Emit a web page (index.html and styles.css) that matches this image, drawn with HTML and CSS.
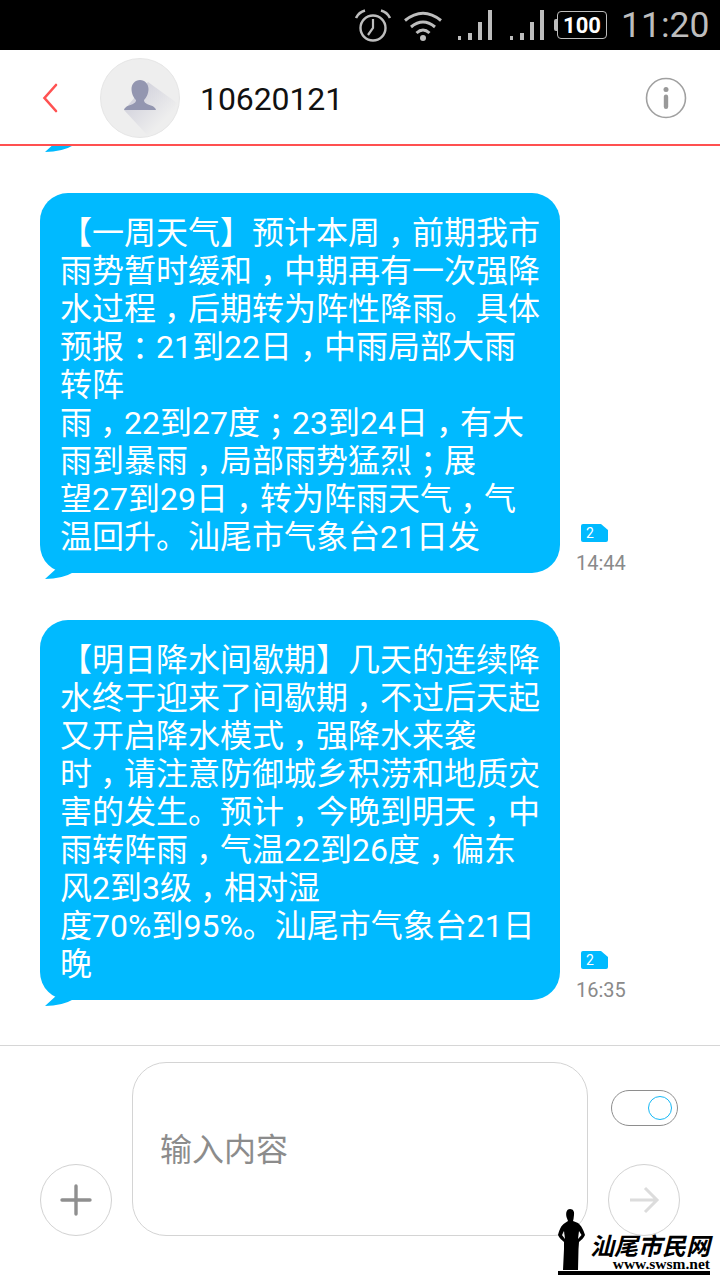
FILE: index.html
```html
<!DOCTYPE html>
<html lang="zh-CN">
  <head>
    <meta charset="UTF-8" />
    <meta name="viewport" content="width=device-width, initial-scale=1.0" />
    <title>10620121</title>
    <link rel="stylesheet" href="styles.css">
  </head>
  <body>
    <div class="screen">

      <!-- status bar -->
      <div class="statusbar">
        <svg class="st-alarm" width="38" height="34" viewBox="0 0 38 34">
          <circle cx="19" cy="19" r="12.5" fill="none" stroke="#bdbdbd" stroke-width="2.4"/>
          <path d="M19 10v9l-5 7" fill="none" stroke="#bdbdbd" stroke-width="2.2"/>
          <path d="M2 9 Q5 3 11 1.500M36 9 Q33 3 27 1.500" fill="none" stroke="#bdbdbd" stroke-width="2.6"/>
        </svg>
        <svg class="st-wifi" width="38" height="32" viewBox="0 0 38 32">
          <path d="M1 10.500 Q19 -4 37 10.500M7 17 Q19 7 31 17M12.500 23 Q19 17 25.500 23" fill="none" stroke="#bdbdbd" stroke-width="3"/>
          <circle cx="19" cy="28" r="3" fill="#bdbdbd"/>
        </svg>
        <svg class="st-signal" width="36" height="30" viewBox="0 0 36 30">
          <path d="M1 26h3v4h-3zM11 23h4v7h-4zM21 12h4v18h-4zM31 0h4v30h-4z" fill="#bdbdbd"/>
        </svg>
        <svg class="st-signal st-signal2" width="36" height="30" viewBox="0 0 36 30">
          <path d="M1 26h3v4h-3zM11 23h4v7h-4zM21 12h4v18h-4zM31 0h4v30h-4z" fill="#bdbdbd"/>
        </svg>
        <div class="battery"><span>100</span></div>
        <div class="clock">11:20</div>
      </div>

      <!-- title bar -->
      <div class="titlebar">
        <svg class="back" width="16" height="30" viewBox="0 0 16 30">
          <path d="M14 2 L2.500 15 L14 28" fill="none" stroke="#ff5252" stroke-width="2.600" stroke-linecap="round"/>
        </svg>
        <div class="avatar">
          <svg width="78" height="78" viewBox="0 0 78 78">
            <defs>
              <linearGradient id="longshadow" x1="0.2" y1="0.2" x2="0.9" y2="0.9">
                <stop offset="0" stop-color="#d2d2dc"/>
                <stop offset="0.75" stop-color="#eeeeee"/>
              </linearGradient>
            </defs>
            <path d="M47 23 L76 44 Q70 66 48 78 L23 51 Z" fill="url(#longshadow)"/>
            <path d="M39 21 C44 21 47.500 25 47.500 30 C47.500 35 45 39 43 41 C43 44 46 45 50 46.500 C53 47.500 54.500 49 55 51 L23 51 C23.500 49 25 47.500 28 46.500 C32 45 35 44 35 41 C33 39 30.500 35 30.500 30 C30.500 25 34 21 39 21 Z" fill="#9396b0"/>
          </svg>
        </div>
        <div class="contact">10620121</div>
        <svg class="info" width="42" height="42" viewBox="0 0 42 42">
          <circle cx="21" cy="21" r="19.500" fill="none" stroke="#a0a0a0" stroke-width="1.600"/>
          <circle cx="21" cy="12.500" r="2.500" fill="#999"/>
          <rect x="18.800" y="17.500" width="4.400" height="14.500" rx="2.200" fill="#999"/>
        </svg>
      </div>

      <!-- messages -->
      <div class="thread">
        <div class="msg">
          <div class="bubble bubble-old"></div>
        </div>

        <div class="msg">
          <div class="bubble">【一周天气】预计本周<span class="cm">，</span>前期我市<br>雨势暂时缓和<span class="cm">，</span>中期再有一次强降<br>水过程<span class="cm">，</span>后期转为阵性降雨。具体<br>预报<span class="cm">：</span>21到22日<span class="cm">，</span>中雨局部大雨<br>转阵<br>雨<span class="cm">，</span>22到27度<span class="cm">；</span>23到24日<span class="cm">，</span>有大<br>雨到暴雨<span class="cm">，</span>局部雨势猛烈<span class="cm">；</span>展<br>望27到29日<span class="cm">，</span>转为阵雨天气<span class="cm">，</span>气<br>温回升。汕尾市气象台21日发</div>
          <div class="meta">
            <div class="sim">2</div>
            <div class="time">14:44</div>
          </div>
        </div>

        <div class="msg">
          <div class="bubble">【明日降水间歇期】几天的连续降<br>水终于迎来了间歇期<span class="cm">，</span>不过后天起<br>又开启降水模式<span class="cm">，</span>强降水来袭<br>时<span class="cm">，</span>请注意防御城乡积涝和地质灾<br>害的发生。预计<span class="cm">，</span>今晚到明天<span class="cm">，</span>中<br>雨转阵雨<span class="cm">，</span>气温22到26度<span class="cm">，</span>偏东<br>风2到3级<span class="cm">，</span>相对湿<br>度70%到95%。汕尾市气象台21日<br>晚</div>
          <div class="meta">
            <div class="sim">2</div>
            <div class="time">16:35</div>
          </div>
        </div>
      </div>

      <!-- input -->
      <div class="composer">
        <div class="round-btn">
          <svg width="32" height="32" viewBox="0 0 32 32">
            <path d="M16 2v28M2 16h28" stroke="#8f8f8f" stroke-width="3.400" stroke-linecap="round"/>
          </svg>
        </div>
        <div class="inputbox">输入内容</div>
        <div class="side">
          <div class="toggle"><span class="knob"></span></div>
          <div class="round-btn">
            <svg width="32" height="32" viewBox="0 0 32 32">
              <path d="M2 16h27M17 4l12 12l-12 12" fill="none" stroke="#dcdcdc" stroke-width="3"/>
            </svg>
          </div>
        </div>
      </div>

      <!-- site watermark -->
      <div class="watermark">
        <svg class="wm-man" width="28" height="62" viewBox="0 0 28 62">
          <path fill-rule="evenodd" d="M12 0 C15.500 0 16.500 3 16 6 L15.500 10 L15 12 L20 14 C23 16 26 22 27 26 C26 29 23 31 21 33 L20.500 40 L20 61 L5 61 L6 40 L6 33 C4 31 1 29 0 26 C1 22 3 16 7 14 L10 12 L8.500 8 C7.500 3 9 0 12 0 Z M6 22 L4 26 L7 30 Z M21 22 L20 30 L23.500 26 Z" fill="#000"/>
        </svg>
        <div class="wm-text">
          <div class="wm-name">汕尾市民网</div>
          <div class="wm-url">www.swsm.net</div>
        </div>
      </div>

    </div>
  </body>
</html>
```

FILE: styles.css
```css
* {
  box-sizing: border-box;
}

body {
  margin: 0;
  background: #fff;
  font-family: Roboto, "Noto Sans CJK SC", sans-serif;
}

.screen {
  position: relative;
  width: 720px;
  height: 1280px;
  display: flex;
  flex-direction: column;
  overflow: hidden;
  background: #fff;
}

.statusbar {
  height: 50px;
  flex-shrink: 0;
  background: #000;
  display: flex;
  align-items: center;
  justify-content: flex-end;
  padding-right: 12px;
  position: relative;
  z-index: 2;
}

.st-alarm {
  margin-right: 12px;
  margin-top: 2px;
}

.st-wifi {
  margin-right: 15px;
  margin-top: 1px;
}

.st-signal {
  margin-right: 16px;
}

.st-signal2 {
  margin-right: 12px;
}

.battery {
  position: relative;
  width: 50px;
  height: 28px;
  border: 1.5px solid #bdbdbd;
  border-radius: 4px;
  margin-right: 14px;
  display: flex;
  align-items: center;
  justify-content: center;
  color: #fff;
  font-size: 22px;
  font-weight: 700;
}

.battery::before {
  content: "";
  position: absolute;
  left: -4px;
  top: 7px;
  width: 3px;
  height: 12px;
  background: #bdbdbd;
  border-radius: 2px 0 0 2px;
}

.clock {
  color: #bdbdbd;
  font-size: 35.500px;
  line-height: 50px;
  width: 87px;
}

.titlebar {
  height: 96px;
  flex-shrink: 0;
  display: flex;
  align-items: center;
  padding: 0 33px 0 42px;
  border-bottom: 2px solid #ff5050;
  background: #fff;
  position: relative;
  z-index: 1;
}

.back {
  margin-top: 2px;
  margin-right: 42px;
}

.avatar {
  width: 80px;
  height: 80px;
  border-radius: 50%;
  background: #eeeeee;
  border: 1px solid #e6e6e6;
  overflow: hidden;
  margin-top: 2px;
}

.contact {
  flex: 1;
  margin-left: 20px;
  margin-top: 3px;
  font-size: 32px;
  letter-spacing: -0.1px;
  color: #111;
}

.info {
  margin-top: 2px;
  margin-left: 1px;
}

.thread {
  flex: 1;
  min-height: 0;
  display: flex;
  flex-direction: column;
  justify-content: flex-end;
  gap: 47px;
  padding: 0 0 45px 40px;
}

.msg {
  display: flex;
  align-items: flex-end;
  flex-shrink: 0;
}

.bubble {
  position: relative;
  width: 520px;
  padding: 21px 0 17px 20px;
  background: #00baff;
  border-radius: 28px;
  color: #fff;
  font-family: Roboto, "Noto Sans CJK SC", sans-serif;
  font-size: 32px;
  line-height: 38px;
  white-space: nowrap;
}

/* the phone's font sets these marks in the middle of the cell */
.cm {
  font-feature-settings: "halt";
  padding: 0 0.25em;
}

.bubble::after {
  content: "";
  position: absolute;
  left: 4px;
  bottom: -6px;
  width: 30px;
  height: 14px;
  background: #00baff;
  clip-path: path("M9 0 L13 3 L1 14 Q18 14 30 7 L20 0 Z");
}

.bubble-old {
  height: 50px;
}

.meta {
  width: 49px;
  margin-left: 16px;
  margin-bottom: -2px;
  display: flex;
  flex-direction: column;
}

.sim {
  width: 27px;
  height: 18px;
  margin-left: 5px;
  padding-left: 5px;
  background: #00baff;
  color: #fff;
  font-size: 14px;
  line-height: 18px;
  border-radius: 2px;
  clip-path: polygon(0 0, 20px 0, 27px 6px, 27px 18px, 0 18px);
}

.time {
  margin-top: 9px;
  color: #8a8a8a;
  font-size: 20px;
  line-height: 24px;
  white-space: nowrap;
}

.composer {
  height: 235px;
  flex-shrink: 0;
  border-top: 1px solid #d6d6d6;
  display: flex;
  align-items: flex-end;
  gap: 20px;
  padding: 16px 40px 44px;
}

.round-btn {
  width: 72px;
  height: 72px;
  flex-shrink: 0;
  border: 1px solid #d2d2d2;
  border-radius: 50%;
  display: flex;
  align-items: center;
  justify-content: center;
}

.inputbox {
  width: 456px;
  height: 174px;
  border: 1.5px solid #d4d4d4;
  border-radius: 34px;
  padding: 0 0 4px 27px;
  display: flex;
  align-items: center;
  color: #8c8c8c;
  font-size: 32px;
}

.side {
  width: 72px;
  height: 174px;
  display: flex;
  flex-direction: column;
  justify-content: space-between;
  padding-top: 28px;
}

.toggle {
  width: 67px;
  height: 36px;
  margin-left: 3px;
  border: 1px solid #8e8e8e;
  border-radius: 18px;
  display: flex;
  align-items: center;
  justify-content: flex-end;
  padding-right: 5px;
}

.knob {
  width: 24px;
  height: 24px;
  border: 1.5px solid #16b8f5;
  border-radius: 50%;
}

.watermark {
  position: absolute;
  left: 558px;
  top: 1209px;
  width: 152px;
  height: 66px;
  display: flex;
  align-items: flex-end;
  border-bottom: 4px solid #000;
}

.wm-man {
  flex-shrink: 0;
}

.wm-text {
  margin-left: 2px;
  width: 122px;
  text-align: right;
  color: #000;
}

.wm-name {
  font-family: "Noto Sans CJK SC", sans-serif;
  font-size: 24px;
  line-height: 24px;
  font-style: italic;
  font-weight: 700;
  white-space: nowrap;
}

.wm-url {
  font-family: "Liberation Serif", serif;
  font-size: 15.500px;
  line-height: 14px;
  font-weight: 700;
  white-space: nowrap;
}
```
